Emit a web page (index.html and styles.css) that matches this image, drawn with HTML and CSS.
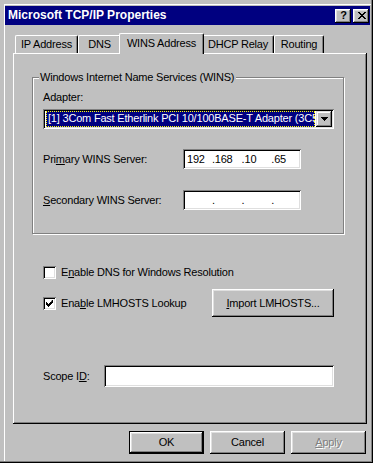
FILE: index.html
```html
<!DOCTYPE html>
<html lang="en">
<head>
    <meta charset="UTF-8">
    <title>Microsoft TCP/IP Properties</title>
    <link rel="stylesheet" href="styles.css">
</head>
<body>
    <div class="window">
        <div class="titlebar">
            <span class="title">Microsoft TCP/IP Properties</span>
            <div class="title-buttons">
                <div class="tbtn help">?</div>
                <div class="tbtn">
                    <svg width="8" height="7" viewBox="0 0 8 7"><path d="M0 0h2v1h1v1h2v-1h1v-1h2v1h-1v1h-1v1h-1v1h1v1h1v1h1v1h-2v-1h-1v-1h-2v1h-1v1h-2v-1h1v-1h1v-1h1v-1h-1v-1h-1v-1h-1z" fill="#000"/></svg>
                </div>
            </div>
        </div>

        <div class="tabs">
            <div class="tab t-ip">IP Address</div>
            <div class="tab t-dns">DNS</div>
            <div class="tab active t-wins">WINS Address</div>
            <div class="tab t-dhcp">DHCP Relay</div>
            <div class="tab t-route">Routing</div>
        </div>

        <div class="panel">
            <div class="group">
                <span class="group-title">Windows Internet Name Services (WINS)</span>
                <div class="label">Adapter:</div>
                <div class="combo">
                    <div class="combo-value"><span>[1] 3Com Fast Etherlink PCI 10/100BASE-T Adapter (3C5</span></div>
                    <div class="combo-btn">
                        <svg width="7" height="4" viewBox="0 0 7 4"><path d="M0 0h7v1h-1v1h-1v1h-1v1h-1v-1h-1v-1h-1v-1h-1z" fill="#000"/></svg>
                    </div>
                </div>
                <div class="field-row first">
                    <span class="field-label">Pri<u>m</u>ary WINS Server:</span>
                    <div class="ip">
                        <span class="seg s1">192</span><span class="seg">.168</span><span class="seg">.10</span><span class="seg">.65</span>
                    </div>
                </div>
                <div class="field-row second">
                    <span class="field-label"><u>S</u>econdary WINS Server:</span>
                    <div class="ip">
                        <span class="seg s1"></span><span class="seg">.</span><span class="seg">.</span><span class="seg">.</span>
                    </div>
                </div>
            </div>

            <div class="check-row dns">
                <span class="checkbox"></span>
                <span>E<u>n</u>able DNS for Windows Resolution</span>
            </div>
            <div class="check-row lmhosts">
                <span class="checkbox">
                    <svg width="7" height="7" viewBox="0 0 7 7"><path d="M6 0h1v3h-1v1h-1v1h-1v1h-1v1h-1v-1h-1v-1h-1v-3h1v1h1v1h1v-1h1v-1h1z" fill="#000"/></svg>
                </span>
                <span class="check-text">Ena<u>b</u>le LMHOSTS Lookup</span>
                <div class="button import"><u>I</u>mport LMHOSTS...</div>
            </div>

            <div class="scope-row">
                <span class="scope-label">Scope I<u>D</u>:</span>
                <div class="textbox scope"></div>
            </div>
        </div>

        <div class="footer">
            <div class="button default">OK</div>
            <div class="button">Cancel</div>
            <div class="button disabled"><u>A</u>pply</div>
        </div>
    </div>
</body>
</html>
```

FILE: styles.css
```css
body {
    margin: 0;
    background-color: #ffffff;
    font-family: "Liberation Sans", Arial, sans-serif;
    font-size: 11px;
    line-height: 13px;
    letter-spacing: -0.2px;
    color: #000000;
}
u {
    text-decoration: underline;
    text-underline-offset: 1px;
}
.window {
    width: 373px;
    height: 463px;
    box-sizing: border-box;
    padding: 6px 3px 0 5px;
    background-color: #c0c0c0;
    box-shadow: inset -1px -1px #000000, inset -2px -2px #808080, inset 4px 4px #c0c0c0, inset 5px 5px #ffffff;
}
.titlebar {
    height: 19px;
    background-color: #000080;
    display: flex;
    align-items: center;
    justify-content: space-between;
    padding: 0 1px 0 3px;
}
.title {
    color: #ffffff;
    font-weight: bold;
    font-size: 12px;
    letter-spacing: 0;
}
.title-buttons {
    display: flex;
    gap: 2px;
}
.tbtn {
    width: 16px;
    height: 14px;
    box-sizing: border-box;
    background-color: #c0c0c0;
    box-shadow: inset -1px -1px #000000, inset 1px 1px #ffffff, inset -2px -2px #808080, inset 2px 2px #dfdfdf;
    display: flex;
    align-items: center;
    justify-content: center;
    padding: 0 0 1px 1px;
}
.tbtn.help {
    font-weight: bold;
    font-size: 11px;
    line-height: 11px;
}
.tabs {
    display: flex;
    margin-top: 8px;
    padding-left: 10px;
    height: 20px;
    align-items: flex-end;
}
.tab {
    height: 18px;
    box-sizing: border-box;
    border-top: 1px solid #ffffff;
    border-left: 1px solid #ffffff;
    border-right: 1px solid #000000;
    border-radius: 2px 2px 0 0;
    box-shadow: inset -1px 0 #808080;
    text-align: center;
    padding-top: 2px;
}
.t-ip { width: 63px; }
.t-dns { width: 43px; }
.t-wins { width: 85px; }
.t-dhcp { width: 72px; }
.t-route { width: 50px; }
.tab.active {
    height: 21px;
    margin: 0 -2px -1px -2px;
    padding-top: 3px;
    background-color: #c0c0c0;
    position: relative;
    z-index: 1;
}
.panel {
    width: 354px;
    height: 371px;
    box-sizing: border-box;
    margin-left: 8px;
    padding: 24px 0 0 19px;
    box-shadow: inset -1px -1px #000000, inset 1px 1px #ffffff, inset -2px -2px #808080;
}
.group {
    position: relative;
    width: 312px;
    height: 157px;
    box-sizing: border-box;
    border: 1px solid #808080;
    box-shadow: inset 1px 1px #ffffff, 1px 1px #ffffff;
    padding: 13px 0 0 10px;
}
.group-title {
    position: absolute;
    top: -7px;
    left: 6px;
    padding: 0 2px 0 1px;
    background-color: #c0c0c0;
}
.combo {
    margin-top: 5px;
    width: 291px;
    height: 20px;
    box-sizing: border-box;
    background-color: #ffffff;
    box-shadow: inset 1px 1px #808080, inset -1px -1px #ffffff, inset 2px 2px #000000, inset -2px -2px #dfdfdf;
    display: flex;
    padding: 2px;
}
.combo-value {
    flex: 1;
    padding: 0 1px;
    overflow: hidden;
    white-space: nowrap;
}
.combo-value span {
    display: block;
    height: 16px;
    box-sizing: border-box;
    padding: 1px 0 0 2px;
    background-color: #000080;
    color: #ffffff;
    outline: 1px dotted #ffff00;
    outline-offset: -1px;
    overflow: hidden;
}
.combo-btn {
    width: 16px;
    height: 16px;
    box-sizing: border-box;
    background-color: #c0c0c0;
    box-shadow: inset -1px -1px #000000, inset 1px 1px #dfdfdf, inset -2px -2px #808080, inset 2px 2px #ffffff;
    display: flex;
    align-items: center;
    justify-content: center;
}
.field-row {
    display: flex;
    align-items: center;
    height: 20px;
}
.field-row.first {
    margin-top: 20px;
}
.field-row.second {
    margin-top: 21px;
}
.field-label {
    width: 140px;
}
.ip,
.textbox {
    height: 20px;
    box-sizing: border-box;
    background-color: #ffffff;
    box-shadow: inset 1px 1px #808080, inset -1px -1px #ffffff, inset 2px 2px #000000, inset -2px -2px #dfdfdf;
}
.ip {
    width: 118px;
    display: flex;
    align-items: center;
    padding: 1px 0 0 4px;
}
.seg {
    width: 31px;
}
.seg.s1 {
    width: 26px;
}
.check-row {
    display: flex;
    align-items: center;
    padding-left: 11px;
}
.check-row.dns {
    margin-top: 32px;
    height: 13px;
}
.check-row.lmhosts {
    margin-top: 10px;
    height: 28px;
}
.checkbox {
    width: 13px;
    height: 13px;
    box-sizing: border-box;
    margin-right: 5px;
    background-color: #ffffff;
    box-shadow: inset 1px 1px #808080, inset -1px -1px #ffffff, inset 2px 2px #000000, inset -2px -2px #dfdfdf;
    display: flex;
    align-items: center;
    justify-content: center;
}
.check-text {
    width: 151px;
}
.button {
    width: 75px;
    height: 23px;
    box-sizing: border-box;
    background-color: #c0c0c0;
    box-shadow: inset -1px -1px #000000, inset 1px 1px #ffffff, inset -2px -2px #808080, inset 2px 2px #dfdfdf;
    display: flex;
    align-items: center;
    justify-content: center;
}
.button.import {
    width: 122px;
    height: 28px;
}
.scope-row {
    display: flex;
    align-items: center;
    margin-top: 48px;
    padding-left: 11px;
}
.scope-label {
    width: 61px;
}
.textbox.scope {
    width: 230px;
    height: 22px;
}
.footer {
    display: flex;
    justify-content: flex-end;
    gap: 6px;
    margin-top: 7px;
    padding-right: 4px;
}
.button.default {
    border: 1px solid #000000;
    box-shadow: inset -1px -1px #000000, inset 1px 1px #ffffff, inset -2px -2px #808080, inset 2px 2px #dfdfdf;
}
.button.disabled {
    color: #808080;
    text-shadow: 1px 1px #ffffff;
}
```
